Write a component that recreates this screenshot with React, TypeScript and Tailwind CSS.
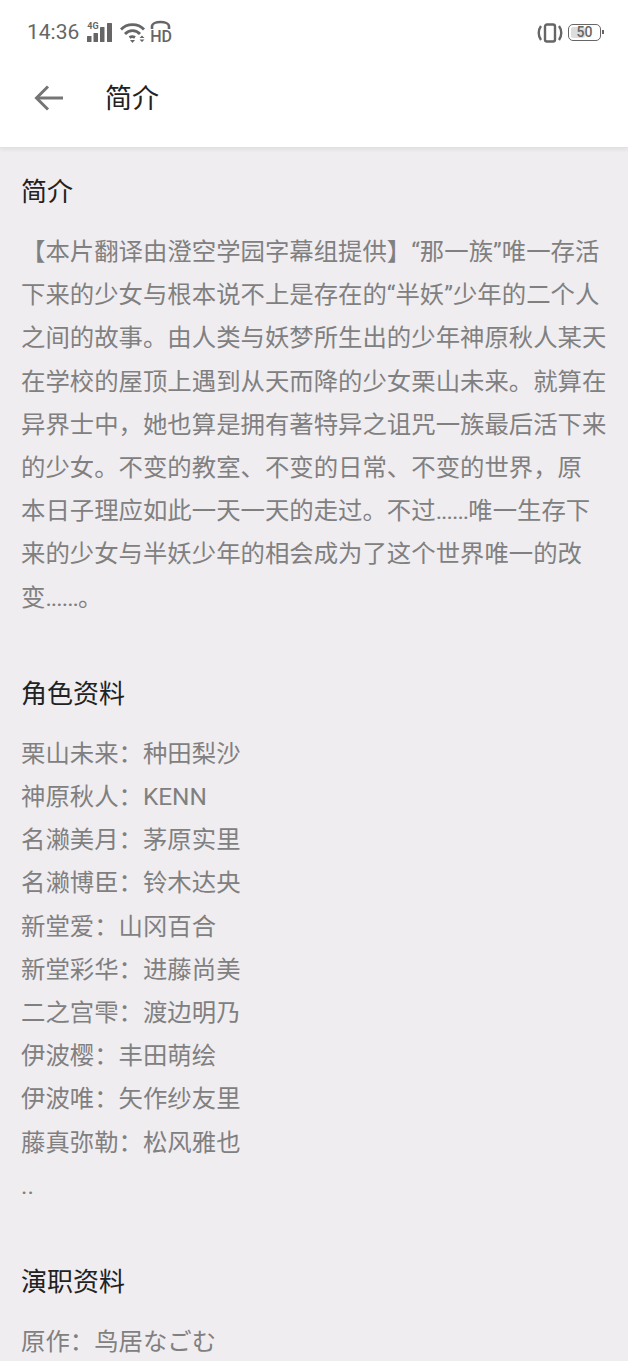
import React from 'react';

// the reference squeezes the dots tighter than Roboto does
const Dots = () => <span className="tracking-[-1px]">......</span>;

const SUMMARY: React.ReactNode[] = [
  '【本片翻译由澄空学园字幕组提供】“那一族”唯一存活',
  '下来的少女与根本说不上是存在的“半妖”少年的二个人',
  '之间的故事。由人类与妖梦所生出的少年神原秋人某天',
  '在学校的屋顶上遇到从天而降的少女栗山未来。就算在',
  '异界士中，她也算是拥有著特异之诅咒一族最后活下来',
  '的少女。不变的教室、不变的日常、不变的世界，原',
  <>本日子理应如此一天一天的走过。不过<Dots />唯一生存下</>,
  '来的少女与半妖少年的相会成为了这个世界唯一的改',
  <>变<Dots />。</>,
];

const CAST = [
  '栗山未来：种田梨沙',
  '神原秋人：KENN',
  '名濑美月：茅原实里',
  '名濑博臣：铃木达央',
  '新堂爱：山冈百合',
  '新堂彩华：进藤尚美',
  '二之宫雫：渡边明乃',
  '伊波樱：丰田萌绘',
  '伊波唯：矢作纱友里',
  '藤真弥勒：松风雅也',
  '..',
];

function Section({ title, lines, className }: { title: string; lines: React.ReactNode[]; className?: string }) {
  return (
    <section className={className}>
      <h2 className="text-[26px] leading-[43px] text-[#222222] mb-[16px]">{title}</h2>
      {lines.map((line, i) => (
        <p key={i} className="text-[24.4px] leading-[43.2px] text-[#808080] whitespace-nowrap">
          {line}
        </p>
      ))}
    </section>
  );
}

function StatusBar() {
  return (
    <div className="h-[56px] pl-[27px] pr-[27px] pt-[9px] flex items-center justify-between text-[#666666]">
      <div className="flex items-center">
        <span className="text-[21px]">14:36</span>
        <div className="relative ml-[8px] w-[26px] h-[20px]">
          <span className="absolute left-0 -top-[2px] text-[9px] leading-[10px] font-bold">4G</span>
          <svg viewBox="0 0 26 20" className="w-[26px] h-[20px]" fill="#666666">
            <rect x="0" y="13" width="4.5" height="6" rx="0.5" />
            <rect x="6.5" y="10" width="4.5" height="9" rx="0.5" />
            <rect x="13" y="4" width="4.5" height="15" rx="0.5" />
            <rect x="20" y="0" width="5" height="19" rx="0.5" />
          </svg>
        </div>
        <svg viewBox="0 0 26 20" className="ml-[7px] w-[26px] h-[20px]" fill="none" stroke="#666666" strokeWidth="2.8">
          <path d="M1 6.5 C7 0 18 0 24 6.5" />
          <path d="M5 11 C9 6.5 16 6.5 20 11" />
          <path d="M9.5 14.5 C11 13.5 13.5 13.5 15 14.5" />
          <path d="M10 17 L12.5 20 L15 17 Z" fill="#666666" stroke="none" />
          <path d="M19.5 15 L22 12.5 L24.5 15 Z M19.5 16.5 L22 19 L24.5 16.5 Z" fill="#666666" stroke="none" />
        </svg>
        <div className="relative ml-[4px] w-[21px] h-[22px]">
          <svg viewBox="0 0 21 10" className="absolute -top-[2px] left-0 w-[21px] h-[10px]" fill="none" stroke="#666666" strokeWidth="2.6">
            <path d="M2 9 V6.5 C2 0.5 19 0.5 19 6.5 V9" />
          </svg>
          <span className="absolute left-0 top-[7px] text-[16px] leading-[15px] font-medium tracking-[-0.2px]">HD</span>
        </div>
      </div>
      <div className="flex items-center">
        <svg viewBox="0 0 26 20" className="w-[26px] h-[20px]" fill="none" stroke="#666666" strokeWidth="2.4">
          <rect x="8" y="1.5" width="10" height="17" rx="2" />
          <path d="M4 3 C1 7 1 13 4 17" />
          <path d="M22 3 C25 7 25 13 22 17" />
        </svg>
        <div className="ml-[5px] relative w-[33px] h-[17px] rounded-[5px] border-[1.5px] border-[#666666] flex items-center justify-center">
          <div className="absolute left-[2px] top-[2px] bottom-[2px] w-[14px] bg-[#dddddd] rounded-[2px]" />
          <span className="relative text-[14px] leading-[13px] font-medium">50</span>
          <div className="absolute -right-[4px] top-[5px] w-[2px] h-[4px] bg-[#666666]" />
        </div>
      </div>
    </div>
  );
}

export default function App() {
  return (
    <div
      className="h-[1361px] overflow-hidden bg-[#f0edf1]"
      style={{ fontFamily: 'Roboto, "Noto Sans CJK SC", sans-serif' }}
    >
      <header className="h-[148px] bg-white border-b border-[#e2e0e2] shadow-[0_2px_4px_rgba(0,0,0,0.06)]">
        <StatusBar />
        <div className="h-[84px] flex items-center pl-[34px]">
          <svg viewBox="0 0 30 26" className="w-[30px] h-[26px]" fill="none" stroke="#757575" strokeWidth="3">
            <path d="M29 13 H3" />
            <path d="M14 1.5 L2.5 13 L14 24.5" />
          </svg>
          <h1 className="ml-[41px] pt-[2px] text-[27px] text-[#222222]">简介</h1>
        </div>
      </header>
      <main className="pl-[21px] pt-[23px]">
        <Section title="简介" lines={SUMMARY} />
        <Section title="角色资料" lines={CAST} className="mt-[54px]" />
        <Section title="演职资料" lines={['原作：鸟居なごむ']} className="mt-[54px]" />
      </main>
    </div>
  );
}
